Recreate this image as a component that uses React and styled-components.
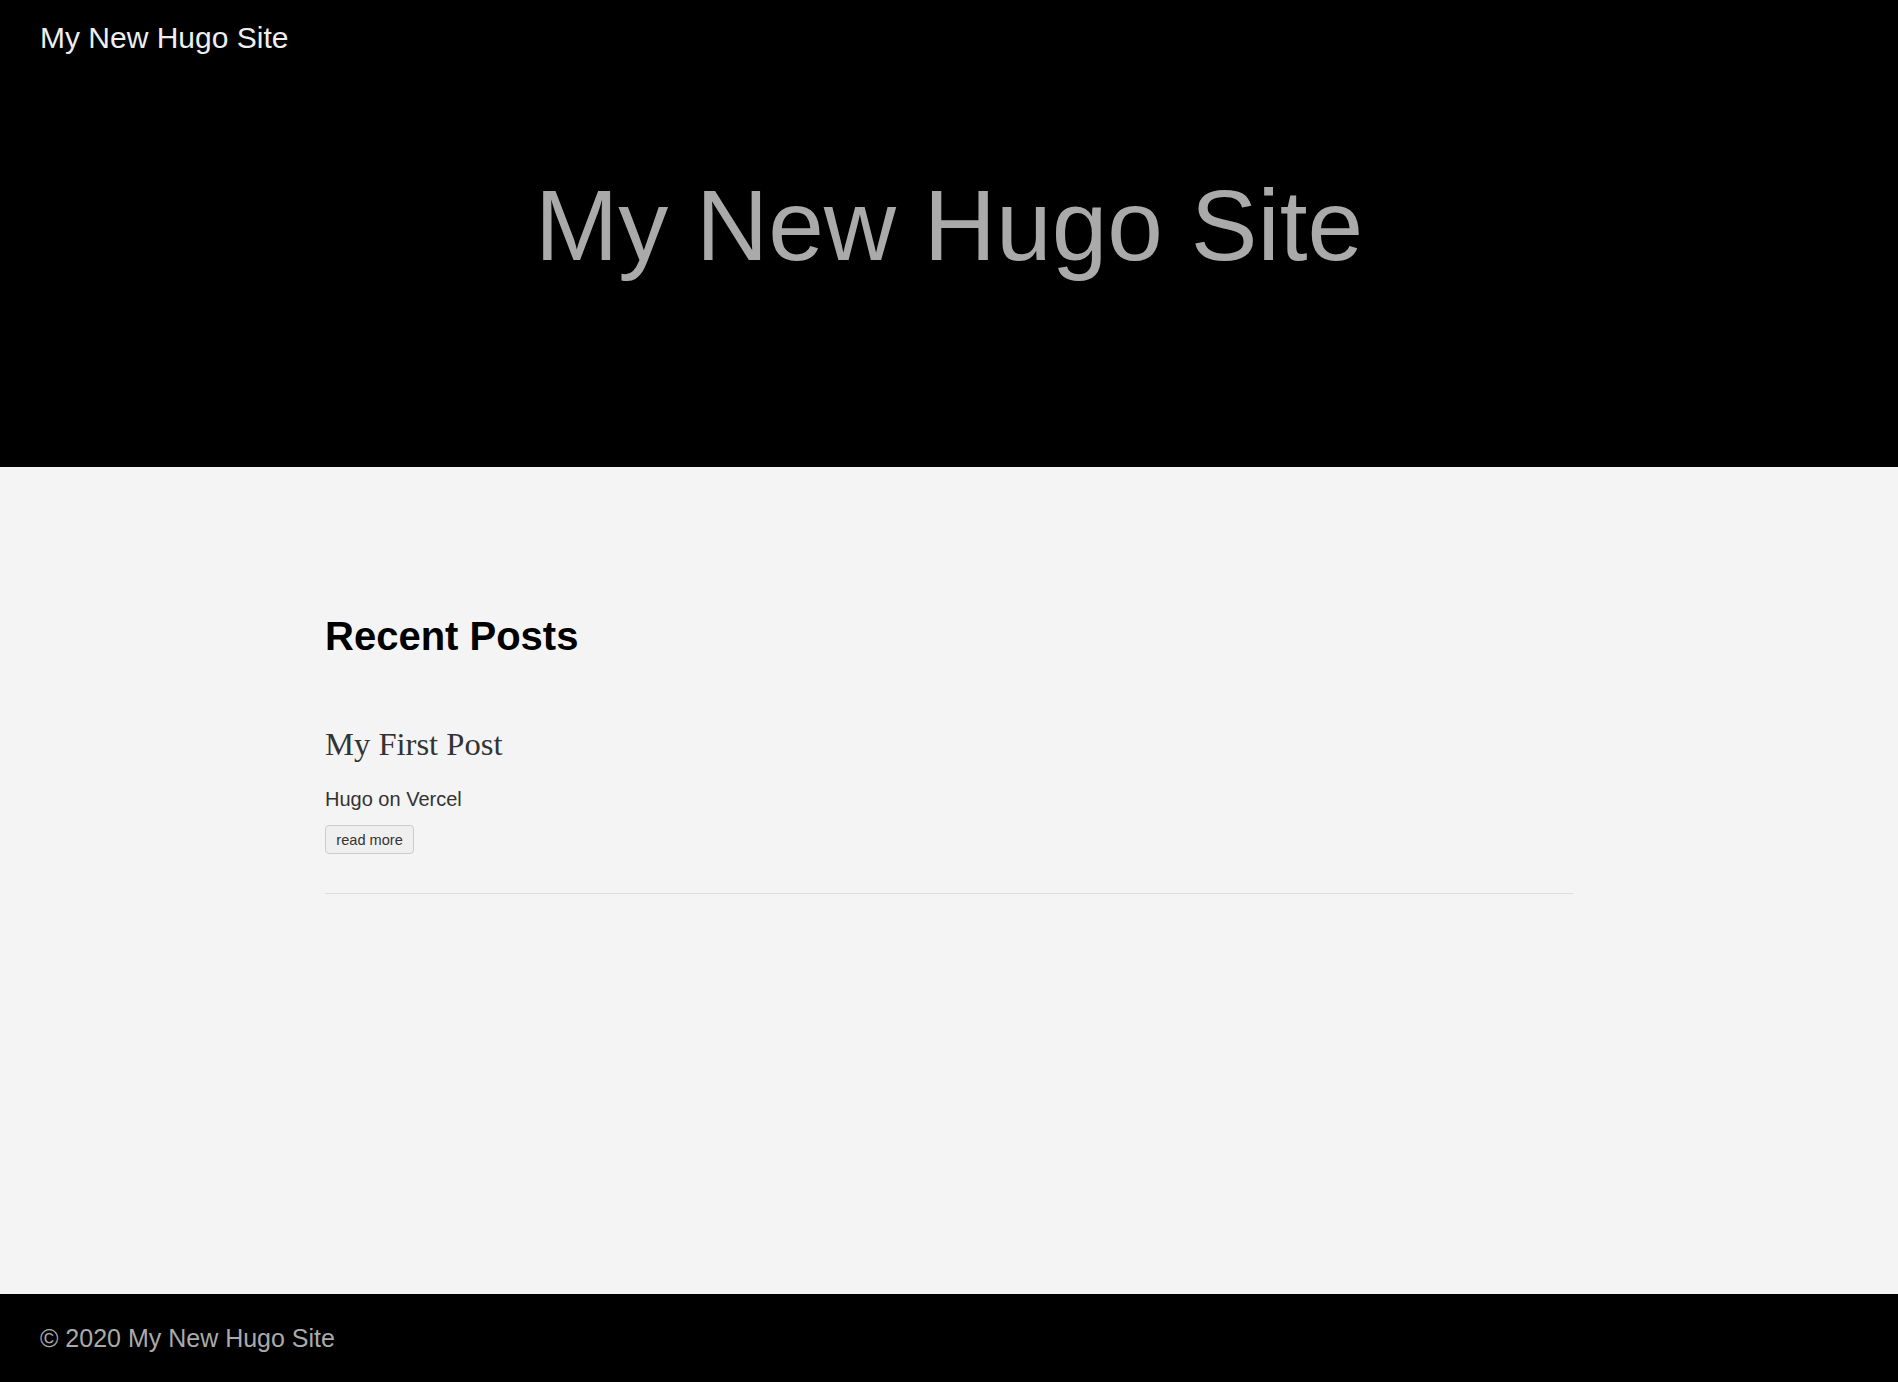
import React from "react";
import styled, { createGlobalStyle } from "styled-components";

const GlobalStyle = createGlobalStyle`
  html, body {
    margin: 0;
    padding: 0;
  }
  body {
    font-family: "Liberation Sans", Arial, sans-serif;
    background: #f4f4f4;
  }
  * { box-sizing: border-box; }
`;

const Page = styled.div`
  display: flex;
  flex-direction: column;
  min-height: 100vh;
`;

const Header = styled.header`
  background: #000;
  height: 467px;
  display: flex;
  flex-direction: column;
`;

const Nav = styled.nav`
  padding: 21px 40px 0;
`;

const NavTitle = styled.a`
  color: #eeeeee;
  font-size: 30px;
  text-decoration: none;
  line-height: normal;
`;

const Hero = styled.h1`
  margin: 113px 0 0;
  text-align: center;
  color: #aaaaaa;
  font-size: 100px;
  font-weight: 400;
  line-height: normal;
`;

const Main = styled.main`
  flex: 1;
  background: #f4f4f4;
  padding-top: 147px;
`;

const Container = styled.div`
  max-width: 1248px;
  margin: 0 auto;
`;

const SectionTitle = styled.h2`
  margin: 0 0 67px;
  font-size: 40px;
  font-weight: 700;
  color: #000;
  line-height: normal;
`;

const Post = styled.article`
  display: flex;
  flex-direction: column;
  align-items: flex-start;
  padding-bottom: 39px;
  border-bottom: 1px solid #dddddd;
`;

const PostTitle = styled.h3`
  margin: 0 0 25px;
  font-family: "Liberation Serif", "Times New Roman", serif;
  font-size: 32.6px;
  font-weight: 400;
  color: #333;
  line-height: normal;
`;

const Summary = styled.p`
  margin: 0 0 14px;
  font-size: 20px;
  color: #333;
  line-height: normal;
`;

const ReadMore = styled.a`
  display: inline-block;
  font-size: 14.6px;
  color: #333;
  text-decoration: none;
  background: #efefef;
  border: 1px solid #cccccc;
  border-radius: 4px;
  padding: 5.5px 10.3px;
  line-height: normal;
`;

const Footer = styled.footer`
  background: #000;
  height: 88px;
  padding: 30px 40px 0;
`;

const FooterText = styled.p`
  margin: 0;
  color: #aaaaaa;
  font-size: 25px;
  line-height: normal;
`;

export default function App() {
  return (
    <>
      <GlobalStyle />
      <Page>
        <Header>
          <Nav>
            <NavTitle href="#">My New Hugo Site</NavTitle>
          </Nav>
          <Hero>My New Hugo Site</Hero>
        </Header>
        <Main>
          <Container>
            <SectionTitle>Recent Posts</SectionTitle>
            <Post>
              <PostTitle>My First Post</PostTitle>
              <Summary>Hugo on Vercel</Summary>
              <ReadMore href="#">read more</ReadMore>
            </Post>
          </Container>
        </Main>
        <Footer>
          <FooterText>© 2020 My New Hugo Site</FooterText>
        </Footer>
      </Page>
    </>
  );
}
